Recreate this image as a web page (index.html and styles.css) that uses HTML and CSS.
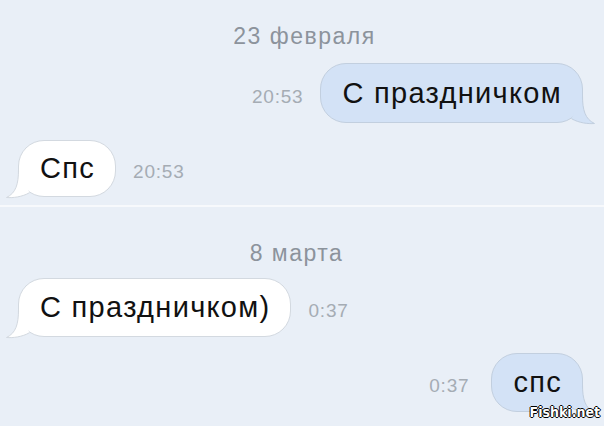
FILE: index.html
```html
<!DOCTYPE html>
<html lang="ru">
	<head>
		<meta charset="UTF-8" />
		<meta name="viewport" content="width=device-width, initial-scale=1.0" />
		<title>Сообщения</title>
		<link rel="stylesheet" href="styles.css">
	</head>
	<body>
		<div class="chat">
			<section class="day">
				<div class="date date-feb">23 февраля</div>
				<div class="row out">
					<span class="time">20:53</span>
					<div class="bubble bubble-out bubble-tall">
						С праздничком
						<svg class="tail" width="40" height="36" viewBox="0 0 40 36"><path d="M25.5 5.5 C25.5 20 28 29 37.5 33.5 C31 34 22 33 14.5 28.7" /></svg>
					</div>
				</div>
				<div class="row in">
					<div class="bubble bubble-in bubble-short">
						Спс
						<svg class="tail tail-left" width="40" height="36" viewBox="0 0 40 36"><path d="M25.5 5.5 C25.5 20 28 29 37.5 33.5 C31 34 22 33 14.5 28.7" /></svg>
					</div>
					<span class="time">20:53</span>
				</div>
			</section>
			<section class="day day-next">
				<div class="date">8 марта</div>
				<div class="row in">
					<div class="bubble bubble-in">
						С праздничком)
						<svg class="tail tail-left" width="40" height="36" viewBox="0 0 40 36"><path d="M25.5 5.5 C25.5 20 28 29 37.5 33.5 C31 34 22 33 14.5 28.7" /></svg>
					</div>
					<span class="time">0:37</span>
				</div>
				<div class="row out wide-gap">
					<span class="time">0:37</span>
					<div class="bubble bubble-out">
						спс
						<svg class="tail" width="40" height="36" viewBox="0 0 40 36"><path d="M25.5 5.5 C25.5 20 28 29 37.5 33.5 C31 34 22 33 14.5 28.7" /></svg>
					</div>
				</div>
			</section>
			<div class="watermark">Fishki.net</div>
		</div>
	</body>
</html>
```
FILE: styles.css
```css
body {
	margin: 0;
	background: #e9eff7;
	font-family: "Liberation Sans", Arial, sans-serif;
}
.chat {
	position: relative;
	width: 604px;
	height: 426px;
	overflow: hidden;
}
.day {
	display: flex;
	flex-direction: column;
	gap: 17px;
	padding: 23px 21px 8px 18px;
}
.day-next {
	border-top: 2px solid #f7f9fc;
	padding-top: 33px;
	gap: 16px;
}
.date {
	text-align: center;
	font-size: 23px;
	letter-spacing: 1.5px;
	line-height: 26px;
	color: #8c939c;
	margin-bottom: -3px;
}
.date-feb {
	padding-left: 8px;
}
.day-next .date {
	margin-bottom: -4px;
	padding-right: 8px;
}
.row {
	display: flex;
	align-items: baseline;
	gap: 17px;
}
.row.out {
	justify-content: flex-end;
}
.wide-gap {
	gap: 22px;
}
.time {
	font-size: 19px;
	letter-spacing: 0.8px;
	color: #a5acb4;
}
.bubble {
	position: relative;
	border: 1px solid;
	border-radius: 26px;
	padding: 0 20px 0 21px;
	font-size: 29px;
	letter-spacing: 1.3px;
	line-height: 57px;
	color: #111;
}
.bubble-tall {
	line-height: 58px;
}
.bubble-short {
	line-height: 55px;
}
.bubble-out {
	background: #d3e2f6;
	border-color: #c2cfdf;
}
.bubble-in {
	background: #fff;
	border-color: #d3d9e0;
}
.tail {
	position: absolute;
	right: -15px;
	bottom: -4px;
}
.tail-left {
	right: auto;
	left: -15px;
	transform: scaleX(-1);
}
.tail path {
	stroke-width: 1;
}
.bubble-out .tail path {
	fill: #d3e2f6;
	stroke: #c2cfdf;
}
.bubble-in .tail path {
	fill: #fff;
	stroke: #d3d9e0;
}
.watermark {
	position: absolute;
	right: 4px;
	bottom: 6px;
	font-family: "Liberation Sans Narrow", "DejaVu Sans Condensed", sans-serif;
	font-weight: bold;
	font-size: 14px;
	color: #fff;
	text-shadow: 1px 0 #000, -1px 0 #000, 0 1px #000, 0 -1px #000;
}
```
